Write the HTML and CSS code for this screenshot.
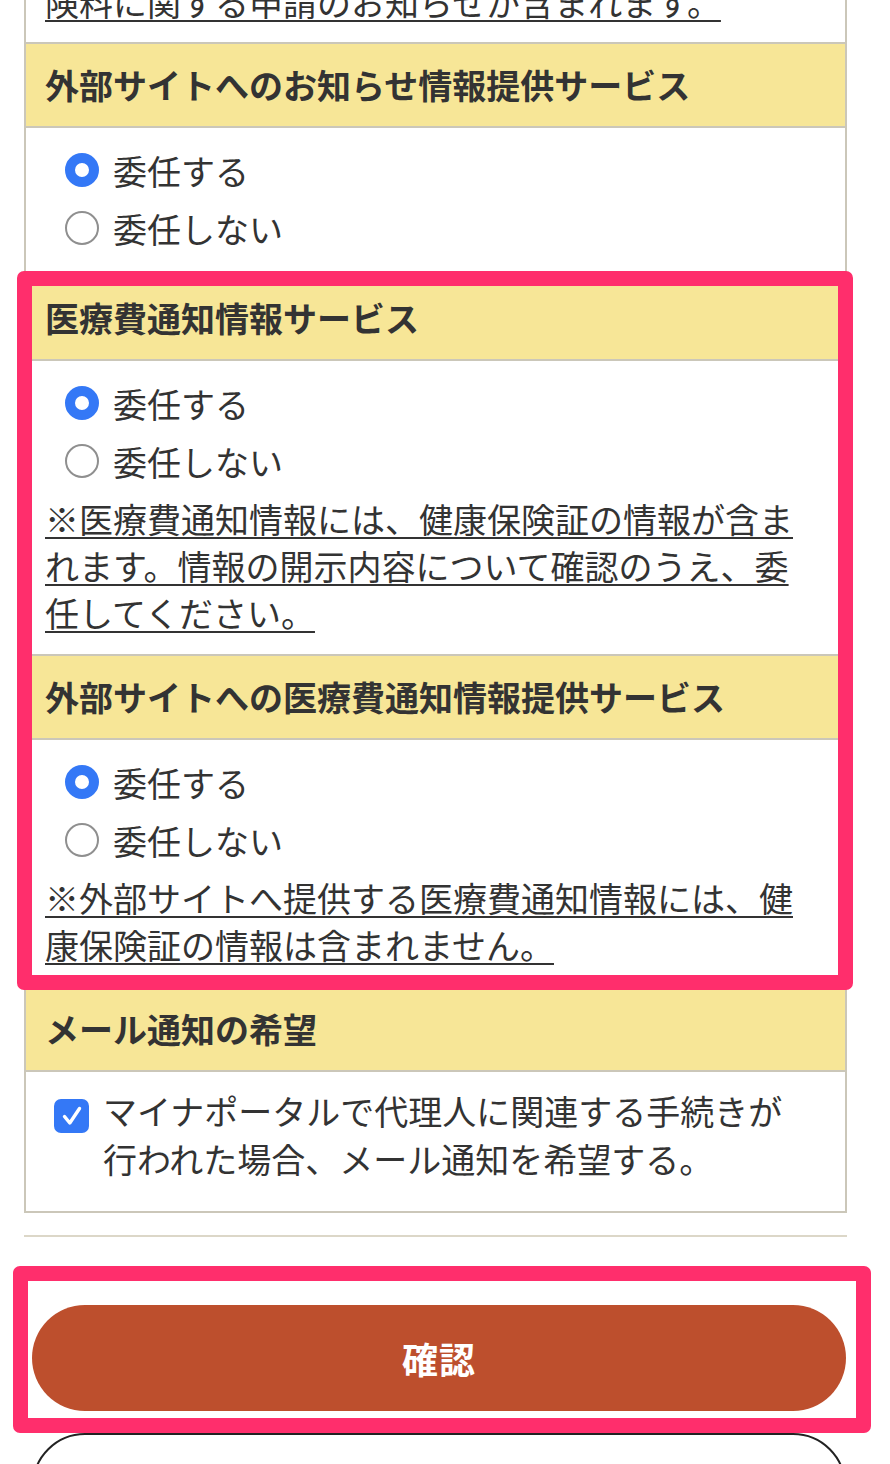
FILE: index.html
```html
<!DOCTYPE html>
<html lang="ja">
    <head>
        <meta charset="UTF-8">
        <meta name="viewport" content="width=device-width, initial-scale=1.0">
        <title>代理人の設定 ⸬ 委任内容の確認</title>
        <link rel="stylesheet" href="styles.css">
    </head>
    <body>
        <main class="page">
            <div class="form-box">
                <section class="item item-tail">
                    <p class="note"><span>険料に関する申請のお知らせが含まれます。</span></p>
                </section>

                <section class="item">
                    <h2 class="item-head">外部サイトへのお知らせ情報提供サービス</h2>
                    <div class="item-body">
                        <div class="choices">
                            <label class="radio"><input type="radio" name="notice-ext" checked><span>委任する</span></label>
                            <label class="radio"><input type="radio" name="notice-ext"><span>委任しない</span></label>
                        </div>
                    </div>
                </section>

                <section class="item">
                    <h2 class="item-head">医療費通知情報サービス</h2>
                    <div class="item-body">
                        <div class="choices">
                            <label class="radio"><input type="radio" name="medical" checked><span>委任する</span></label>
                            <label class="radio"><input type="radio" name="medical"><span>委任しない</span></label>
                        </div>
                        <p class="note"><span>※医療費通知情報には、健康保険証の情報が含まれます。情報の開示内容について確認のうえ、委任してください。</span></p>
                    </div>
                </section>

                <section class="item">
                    <h2 class="item-head">外部サイトへの医療費通知情報提供サービス</h2>
                    <div class="item-body">
                        <div class="choices">
                            <label class="radio"><input type="radio" name="medical-ext" checked><span>委任する</span></label>
                            <label class="radio"><input type="radio" name="medical-ext"><span>委任しない</span></label>
                        </div>
                        <p class="note"><span>※外部サイトへ提供する医療費通知情報には、健康保険証の情報は含まれません。</span></p>
                    </div>
                </section>

                <section class="item">
                    <h2 class="item-head">メール通知の希望</h2>
                    <div class="item-body check-body">
                        <label class="check">
                            <span class="check-box">
                                <svg width="22" height="22" viewBox="0 0 22 22"><path d="M3.5 11.5 L8.8 18 L18.5 3.5" fill="none" stroke="#fff" stroke-width="3.4" stroke-linecap="round" stroke-linejoin="round"/></svg>
                            </span>
                            <span>マイナポータルで代理人に関連する手続きが行われた場合、メール通知を希望する。</span>
                        </label>
                    </div>
                </section>
            </div>

            <hr class="divider">

            <div class="actions">
                <button class="btn btn-primary" type="button">確認</button>
                <button class="btn btn-secondary" type="button">戻る</button>
            </div>
        </main>

        <!-- highlight marks laid over the form -->
        <div class="mark mark-a"></div>
        <div class="mark mark-b"></div>
    </body>
</html>
```

FILE: styles.css
```css
* {
  box-sizing: border-box;
}
html,
body {
  margin: 0;
  padding: 0;
  background: #fff;
}
body {
  display: flow-root;
  font-family: "Noto Sans CJK JP", "Noto Sans", sans-serif;
  font-size: 34px;
  color: #333;
}

.page {
  width: 847px;
  margin-top: -24px;
  padding-left: 24px;
}

.form-box {
  border: 2px solid #cbc7b9;
}
.item + .item {
  border-top: 2px solid #cbc7b9;
}
.item-head {
  margin: 0;
  padding: 24px 19px;
  background: #f7e697;
  border-bottom: 2px solid #cbc7b9;
  font-size: 34px;
  line-height: 34px;
  font-weight: 700;
  color: #333;
}
.item-body {
  padding: 13px 30px 18px 19px;
}
.item-tail {
  padding: 0 30px 17px 19px;
}

.choices {
  padding-left: 20px;
}
.radio {
  display: flex;
  align-items: center;
  gap: 14px;
  height: 58px;
}
.radio input {
  appearance: none;
  -webkit-appearance: none;
  margin: 0;
  width: 34px;
  height: 34px;
  border-radius: 50%;
  border: 2px solid #8f8f8f;
  background: #fff;
}
.radio input:checked {
  border: 10px solid #3478f6;
}

.note {
  margin: 5px 0 0;
  line-height: 47px;
}
.item-tail .note {
  margin: 0;
}
.note span {
  text-decoration: underline;
  text-decoration-thickness: 2px;
  text-underline-offset: 4px;
}

.check-body {
  padding: 15px 42px 28px 28px;
}
.check {
  display: flex;
  align-items: flex-start;
  gap: 14px;
  line-height: 48px;
}
.check-box {
  flex: none;
  display: flex;
  align-items: center;
  justify-content: center;
  width: 35px;
  height: 34px;
  margin-top: 12px;
  border-radius: 7px;
  background: #3478f6;
}

.divider {
  height: 0;
  margin: 22px 0 0;
  border: 0;
  border-top: 2px solid #dcd7c8;
}

.actions {
  display: flex;
  flex-direction: column;
  gap: 22px;
  padding: 68px 1px 0 8px;
}
.btn {
  height: 106px;
  border-radius: 53px;
  font-family: inherit;
  font-size: 36px;
  line-height: 1;
  font-weight: 700;
  letter-spacing: 1px;
}
.btn-primary {
  border: 0;
  background: #bd4f2d;
  color: #fff;
}
.btn-secondary {
  border: 2px solid #222;
  background: #fff;
  color: #333;
}

.mark {
  position: absolute;
  border: 15px solid #ff2e6c;
  border-radius: 7px;
}
.mark-a {
  left: 17px;
  top: 271px;
  width: 836px;
  height: 719px;
}
.mark-b {
  left: 13px;
  top: 1266px;
  width: 858px;
  height: 167px;
}
```
